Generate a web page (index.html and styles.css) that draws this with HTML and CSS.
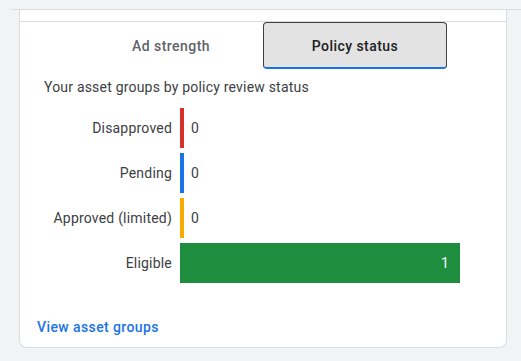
FILE: index.html
```html
<!DOCTYPE html>
<html>
    <head>
        <meta charset="UTF-8">
        <title>Policy status</title>
        <link rel="stylesheet" href="styles.css">
    </head>
    <body>
        <div class="frame">
            <div class="card">
                <div class="card-head"></div>
                <div class="tabs">
                    <a class="tab">Ad strength</a>
                    <a class="tab active">Policy status</a>
                </div>
                <div class="caption">Your asset groups by policy review status</div>
                <div class="chart">
                    <div class="label">Disapproved</div>
                    <div class="track"><span class="bar red" style="width: 4px;"></span><span class="value">0</span></div>
                    <div class="label">Pending</div>
                    <div class="track"><span class="bar blue" style="width: 4px;"></span><span class="value">0</span></div>
                    <div class="label">Approved (limited)</div>
                    <div class="track"><span class="bar yellow" style="width: 4px;"></span><span class="value">0</span></div>
                    <div class="label">Eligible</div>
                    <div class="track"><span class="bar green full" style="width: 280px;"><span class="value in">1</span></span></div>
                </div>
                <a class="link">View asset groups</a>
            </div>
        </div>
    </body>
</html>
```

FILE: styles.css
```css
html{
    background-color: #f1f3f4;
}
body{
    margin: 0;
    padding-top: 9px;
    font-family: Roboto, "Liberation Sans", sans-serif;
    font-size: 14px;
    letter-spacing: 0.2px;
    color: #3c4043;
}
.frame{
    margin-left: 11px;
    border-top: 1px solid #dadce0;
}
.card{
    margin-left: 8px;
    width: 486px;
    background: white;
    border: 1px solid #dadce0;
    border-top: none;
    border-radius: 0 0 8px 8px;
    padding-bottom: 10px;
}
.card-head{
    height: 11px;
    border-bottom: 1px solid #dadce0;
}
.tabs{
    display: flex;
    justify-content: center;
}
.tab{
    width: 184px;
    height: 47px;
    box-sizing: border-box;
    display: flex;
    align-items: center;
    justify-content: center;
    font-weight: 500;
    letter-spacing: 0.45px;
    color: #5f6368;
    padding-top: 1px;
}
.tab.active{
    background: #e3e3e3;
    color: #202124;
    border: 1px solid #3c4043;
    border-bottom: 2px solid #1a73e8;
    border-radius: 4px;
}
.caption{
    padding: 8px 0 0 24px;
    line-height: 20px;
}
.chart{
    display: grid;
    grid-template-columns: 128px 280px;
    column-gap: 8px;
    row-gap: 5px;
    padding: 11px 0 0 24px;
}
.label{
    height: 40px;
    display: flex;
    align-items: center;
    justify-content: flex-end;
}
.track{
    display: flex;
    align-items: center;
}
.bar{
    height: 40px;
    display: block;
}
.red{ background: #d93025; }
.blue{ background: #1a73e8; }
.yellow{ background: #f9ab00; }
.green{ background: #1e8e3e; }
.full{
    display: flex;
    align-items: center;
    justify-content: flex-end;
}
.value{
    margin-left: 7px;
}
.value.in{
    color: white;
    margin: 0 11px 0 0;
}
.link{
    display: block;
    margin: 34px 0 0 17px;
    line-height: 20px;
    letter-spacing: 0.4px;
    color: #1a73e8;
    font-weight: 500;
}
```
